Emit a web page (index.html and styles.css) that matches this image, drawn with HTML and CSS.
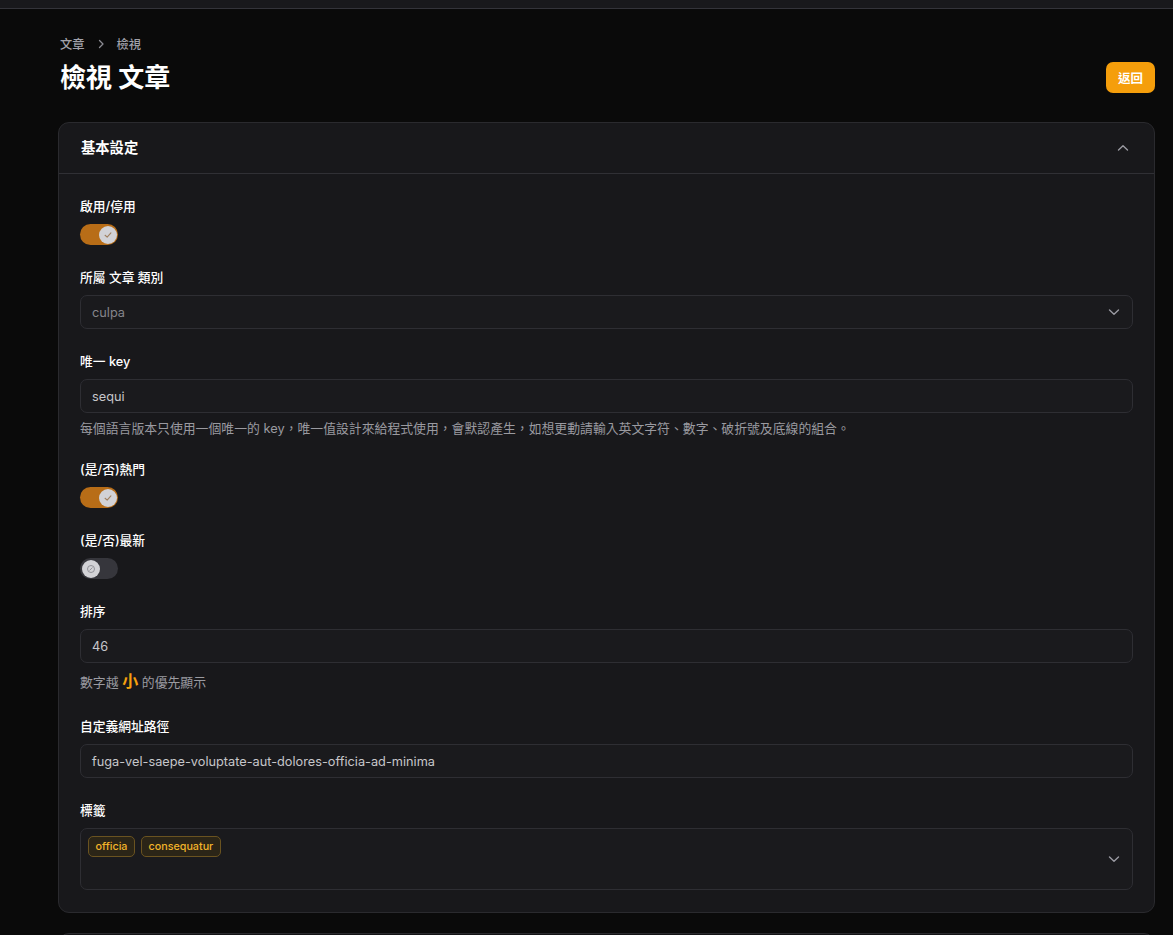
FILE: index.html
```html
<!DOCTYPE html>
<html lang="zh-Hant">
<head>
  <meta charset="UTF-8">
  <meta name="viewport" content="width=device-width, initial-scale=1.0">
  <title>檢視 文章</title>
  <link rel="stylesheet" href="styles.css">
</head>
<body>
  <div class="topbar"></div>

  <main class="page">
    <header class="page-header">
      <div class="page-title">
        <nav class="breadcrumb">
          <span>文章</span>
          <svg class="crumb-sep" viewBox="0 0 12 12" width="12" height="12"><path d="M4.5 2.5 8 6l-3.5 3.5" fill="none" stroke="currentColor" stroke-width="1.3" stroke-linecap="round" stroke-linejoin="round"/></svg>
          <span>檢視</span>
        </nav>
        <h1>檢視 文章</h1>
      </div>
      <button class="btn-back">返回</button>
    </header>

    <section class="card">
      <div class="card-head">
        <h2>基本設定</h2>
        <svg class="chevron" viewBox="0 0 12 8" width="12" height="8"><path d="M1.5 6 6 1.8 10.5 6" fill="none" stroke="currentColor" stroke-width="1.4" stroke-linecap="round" stroke-linejoin="round"/></svg>
      </div>

      <div class="card-body">
        <div class="field">
          <label>啟用/停用</label>
          <span class="toggle on">
            <span class="thumb"><svg viewBox="0 0 12 12" width="10" height="10"><path d="M2.5 6.3 5 8.6l4.5-5.2" fill="none" stroke="currentColor" stroke-width="1.3" stroke-linecap="round" stroke-linejoin="round"/></svg></span>
          </span>
        </div>

        <div class="field">
          <label>所屬 文章 類別</label>
          <div class="input select">
            <span class="muted">culpa</span>
            <svg class="chevron" viewBox="0 0 12 8" width="12" height="8"><path d="M1.5 2 6 6.2 10.5 2" fill="none" stroke="currentColor" stroke-width="1.4" stroke-linecap="round" stroke-linejoin="round"/></svg>
          </div>
        </div>

        <div class="field">
          <label>唯一 key</label>
          <div class="input">sequi</div>
          <p class="hint">每個語言版本只使用一個唯一的 key，唯一值設計來給程式使用，會默認產生，如想更動請輸入英文字符、數字、破折號及底線的組合。</p>
        </div>

        <div class="field">
          <label>(是/否)熱門</label>
          <span class="toggle on">
            <span class="thumb"><svg viewBox="0 0 12 12" width="10" height="10"><path d="M2.5 6.3 5 8.6l4.5-5.2" fill="none" stroke="currentColor" stroke-width="1.3" stroke-linecap="round" stroke-linejoin="round"/></svg></span>
          </span>
        </div>

        <div class="field">
          <label>(是/否)最新</label>
          <span class="toggle">
            <span class="thumb"><svg viewBox="0 0 12 12" width="10" height="10"><circle cx="6" cy="6" r="4.2" fill="none" stroke="currentColor" stroke-width="1.1"/><path d="M4.6 7.4 7.4 4.6" stroke="currentColor" stroke-width="1.1" stroke-linecap="round"/></svg></span>
          </span>
        </div>

        <div class="field">
          <label>排序</label>
          <div class="input">46</div>
          <p class="hint hint-tall">數字越 <strong class="accent">小</strong> 的優先顯示</p>
        </div>

        <div class="field">
          <label>自定義網址路徑</label>
          <div class="input">fuga-vel-saepe-voluptate-aut-dolores-officia-ad-minima</div>
        </div>

        <div class="field">
          <label>標籤</label>
          <div class="input tags">
            <div class="tag-list">
              <span class="tag">officia</span>
              <span class="tag">consequatur</span>
            </div>
            <svg class="chevron" viewBox="0 0 12 8" width="12" height="8"><path d="M1.5 2 6 6.2 10.5 2" fill="none" stroke="currentColor" stroke-width="1.4" stroke-linecap="round" stroke-linejoin="round"/></svg>
          </div>
        </div>
      </div>
    </section>

    <section class="card card-next"></section>
  </main>
</body>
</html>
```

FILE: styles.css
```css
html, body {
  height: 100%;
}
body {
  margin: 0;
  background: #0a0a0a;
  color: #fff;
  font-family: "Inter", "Noto Sans CJK TC", sans-serif;
  overflow: hidden;
}
.topbar {
  height: 8px;
  background: #19191c;
  border-bottom: 1px solid #34343a;
}
.page {
  padding: 25px 18px 0 58px;
}
.page-header {
  display: flex;
  justify-content: space-between;
  align-items: flex-end;
}
.breadcrumb {
  display: flex;
  align-items: center;
  gap: 10px;
  height: 20px;
  margin-left: 2px;
  font-size: 12.25px;
  font-weight: 500;
  color: #a1a1aa;
}
.crumb-sep {
  color: #8b8b93;
}
h1 {
  margin: 8px 0 0 2px;
  font-size: 26px;
  line-height: 32px;
  font-weight: 700;
}
.btn-back {
  height: 31px;
  padding: 0 12px;
  margin-bottom: 1px;
  border: none;
  border-radius: 7px;
  background: #f59e0b;
  color: #fff;
  font-family: inherit;
  font-size: 12.5px;
  font-weight: 700;
}
.card {
  margin-top: 28px;
  background: #18181b;
  border: 1px solid #2a2a2e;
  border-radius: 11px;
}
.card-head {
  display: flex;
  justify-content: space-between;
  align-items: center;
  height: 50px;
  padding: 0 25px 0 22px;
  border-bottom: 1px solid #303035;
}
.card-head h2 {
  margin: -3px 0 0;
  font-size: 14.3px;
  font-weight: 600;
}
.chevron {
  color: #9a9aa2;
  flex-shrink: 0;
}
.card-body {
  display: flex;
  flex-direction: column;
  gap: 22px;
  padding: 22px 21px 22px;
}
.field {
  display: flex;
  flex-direction: column;
  align-items: flex-start;
  gap: 7px;
}
.field label {
  font-size: 12.75px;
  font-weight: 500;
  line-height: 21px;
}
.toggle {
  display: flex;
  align-items: center;
  width: 38px;
  height: 21px;
  padding: 0 1.5px;
  box-sizing: border-box;
  border-radius: 11px;
  background: #36363c;
}
.toggle.on {
  justify-content: flex-end;
  background: #b86d17;
}
.thumb {
  display: flex;
  align-items: center;
  justify-content: center;
  width: 18px;
  height: 18px;
  border-radius: 50%;
  background: #d2d2d6;
  color: #8a8a90;
}
.toggle.on .thumb {
  color: #a08060;
}
.input {
  display: flex;
  align-items: center;
  align-self: stretch;
  height: 34px;
  padding: 0 12px 0 11px;
  box-sizing: border-box;
  border: 1px solid #2e2e33;
  border-radius: 7px;
  background: #1a1a1d;
  color: #c6c6ca;
  font-size: 12.75px;
}
.select {
  justify-content: space-between;
}
.muted {
  color: #85858b;
}
.hint {
  margin: 0;
  font-size: 12.85px;
  line-height: 17px;
  color: #9a9aa0;
}
.hint-tall {
  line-height: 23px;
}
.accent {
  font-size: 16px;
  font-weight: 700;
  color: #f5a00e;
}
.tags {
  align-items: stretch;
  justify-content: space-between;
  height: 62px;
  padding: 7px 12px 0 7px;
}
.tag-list {
  display: flex;
  align-items: flex-start;
  gap: 6px;
}
.tag {
  height: 21px;
  padding: 0 6.5px;
  box-sizing: border-box;
  border: 1px solid #6a5320;
  border-radius: 5px;
  background: #2b2517;
  color: #f2b42a;
  font-size: 10.75px;
  font-weight: 500;
  line-height: 19px;
}
.tags .chevron {
  align-self: center;
  margin-top: -7px;
}
.card-next {
  margin-top: 20px;
  height: 60px;
  background: #141416;
}
```
